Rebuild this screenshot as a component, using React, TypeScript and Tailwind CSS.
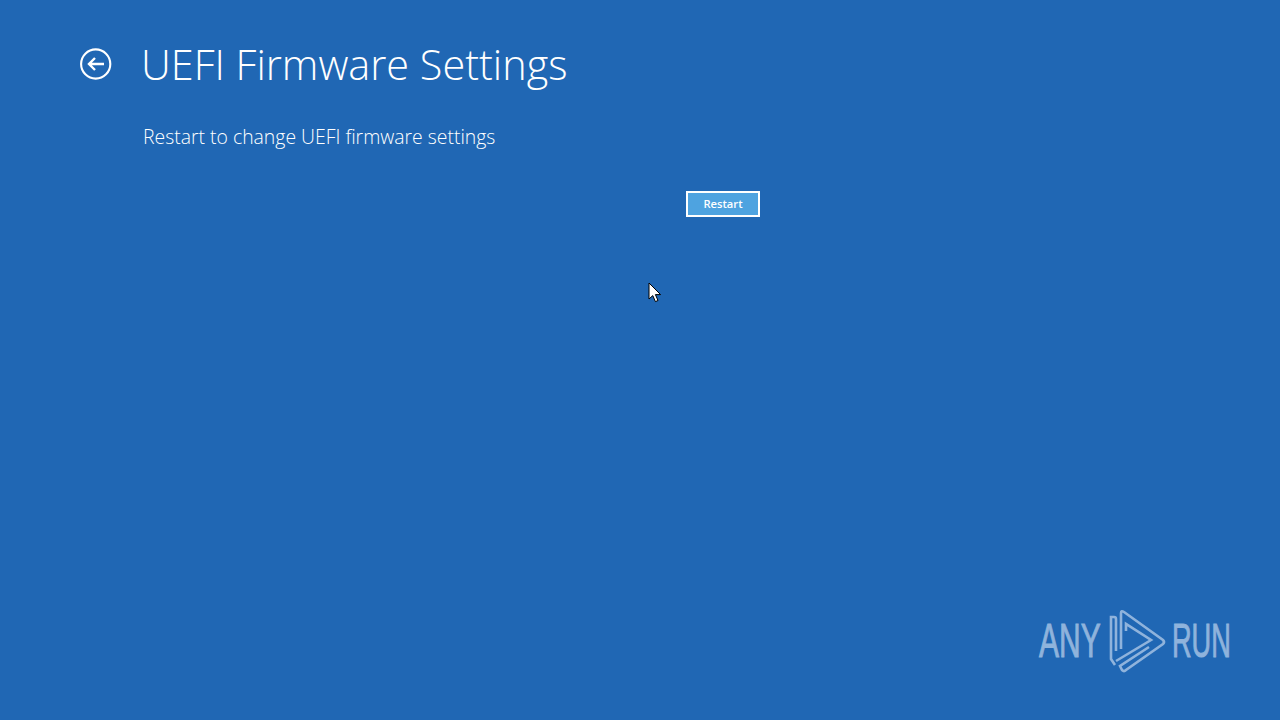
export default function App() {
  return (
    <div className="relative w-[1280px] h-[720px] overflow-hidden bg-[#2067b4] text-white font-['Open_Sans','Noto_Sans',sans-serif]">
      <div className="flex flex-col pl-[80px] pt-[35px]">
        <div className="flex items-center h-[58px]">
          <svg width="32" height="32" viewBox="0 0 32 32" fill="none" stroke="white" className="shrink-0">
            <circle cx="15.7" cy="16" r="14.6" strokeWidth="2.1" />
            <path d="M24 16H9M15 10L9 16L15 22" strokeWidth="2.4" />
          </svg>
          <h1 className="ml-[29px] text-[41.4px] leading-[58px] font-light whitespace-nowrap">UEFI Firmware Settings</h1>
        </div>
        <p className="ml-[63px] mt-[30px] text-[19.4px] leading-[28px] font-light whitespace-nowrap">Restart to change UEFI firmware settings</p>
        <div className="ml-[606px] mt-[40px]">
          <button className="w-[74px] h-[26px] border-2 border-white bg-[#4ea3e0] text-[11.2px] font-semibold flex items-center justify-center">Restart</button>
        </div>
      </div>
      <svg className="absolute left-[648px] top-[282px]" width="14" height="21" viewBox="0 0 14 21">
        <path d="M1 1V17L4.8 13.6L7.4 19.6L10 18.5L7.4 12.6H12.6Z" fill="white" stroke="black" strokeWidth="1" />
      </svg>
      <div className="absolute left-[1039px] top-[605px] w-[192px] h-[70px] text-[#8fb3dc]">
        <span className="absolute left-0 top-[11px] text-[48px] leading-[50px] font-['Liberation_Sans',sans-serif] origin-left scale-x-[0.625] whitespace-nowrap [-webkit-text-stroke:1px_#8fb3dc]">ANY</span>
        <span className="absolute left-[133px] top-[11px] text-[48px] leading-[50px] font-['Liberation_Sans',sans-serif] origin-left scale-x-[0.566] whitespace-nowrap [-webkit-text-stroke:1px_#8fb3dc]">RUN</span>
        <svg className="absolute left-[66px] top-0" width="70" height="70" viewBox="0 0 70 70" fill="none" stroke="#8fb3dc" strokeWidth="2.6">
          <path d="M16 44V8Q16 5 19 7L58 35Q60 37 58 39L21 65Q19 67 17 65L15 61L44 42" />
          <path d="M21 26V19L46 35L11 56" />
          <path d="M11 46V14Q11 12 9 12H6V54L10 60" />
        </svg>
      </div>
    </div>
  );
}
